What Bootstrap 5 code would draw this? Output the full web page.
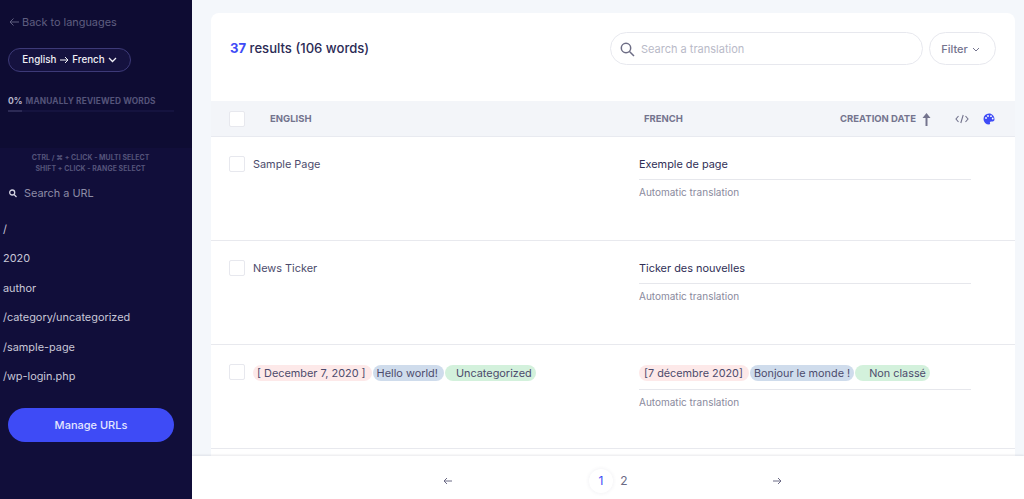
<!DOCTYPE html>
<html lang="en">
<head>
<meta charset="utf-8">
<title>Translations</title>
<link rel="stylesheet" href="https://cdn.jsdelivr.net/npm/bootstrap@5.3.0/dist/css/bootstrap.min.css">
<style>
html,body{height:499px;overflow:hidden}
body{font-family:Inter,"Liberation Sans",sans-serif;background:#f4f7fb;color:#2b2a55;font-size:12px}
.shell{height:499px}
.side{width:192px;flex:none;background:#110e3a;color:#c9c8d8;height:499px}
.side-top{height:148px;background:#0e0c33;padding:14px 8px 0}
.back{color:#5f5e80;font-size:10.9px;line-height:16px;display:flex;align-items:center;gap:2px}
.lang{margin-top:18px;width:123px;height:24px;border:1px solid #3d3a78;border-radius:12px;background:#15123f;color:#f0f0f6;font-size:9.8px;font-weight:500;display:flex;align-items:center;justify-content:center;gap:3px;padding:0}
.review{margin-top:23px;font-size:8.6px;font-weight:700;line-height:12px;color:#b9b8cc;display:flex;gap:3px;align-items:center}
.review span{color:#55547a;font-size:8.3px;letter-spacing:.02em;font-weight:700}
.bar{margin-top:3px;height:2px;width:166px;background:#15133f}
.bar i{display:block;height:2px;width:14px;background:#2c2a55}
.hint{padding:4px 11px 0 0;text-align:center;font-size:6.9px;line-height:11px;font-weight:700;color:#55547a;letter-spacing:.01em}
.urlsearch{margin-top:11px;padding-left:9px;display:flex;align-items:center;gap:7px;color:#8d8ca6;font-size:10.9px;line-height:16px}
.urls{margin-top:14px}
.urls div{height:29.4px;padding-left:3px;font-size:10.9px;line-height:29.4px;color:#c9c8d8}
.manage{display:block;margin:17px 0 0 8px;width:166px;height:34px;border:0;border-radius:17px;background:#3e4bf6;color:#e4e6ff;font-size:11px;font-weight:500}
.mainpane{min-width:0;height:499px}
.panel{margin:13px 9px 0 19px;background:#fff;border-radius:8px 8px 0 0;flex:1;min-height:0;overflow:hidden}
.phead{height:88px;padding:18px 19px 0 19px;display:flex;align-items:flex-start;justify-content:space-between}
.count{font-size:13.1px;font-weight:500;line-height:34px;color:#2b2a55}
.count b{color:#3e4bf6;font-weight:700}
.tools{display:flex;gap:6px;margin-top:1px}
.find{width:313px;height:33px;border:1px solid #e7e8ee;border-radius:17px;display:flex;align-items:center;gap:6px;padding:1px 0 0 9px;color:#b9bac8;font-size:11px}
.filt{width:67px;height:33px;border:1px solid #e7e8ee;border-radius:17px;background:#fff;color:#74748e;font-size:11px;font-weight:500;display:flex;align-items:center;justify-content:center;gap:4px;padding:1px 4px 0 0}
.thd{height:36px;background:#f3f5f9;border-bottom:1px solid #e8eaf0;display:flex;align-items:center;color:#74748e;font-size:9.5px;font-weight:700;white-space:nowrap;padding-top:1px}
.cb{width:16px;height:16px;border:1px solid #e7e8ee;background:#fff;border-radius:2px;flex:none;display:block}
.thd .cb{margin:-1px 0 0 18px}
.col-en{margin-left:25px;width:374px}
.col-fr{width:196px}
.col-dt{display:flex;align-items:center;gap:6px;width:115px}
.col-ic{display:flex;align-items:center;gap:14px}
.trow{height:104px;border-bottom:1px solid #e8e9ee;display:flex;align-items:flex-start;padding-top:19px;font-size:10.9px;color:#4c4b6c}
.trow .cb{margin-left:18px}
.src{margin-left:8px;width:386px;line-height:16px;display:flex;align-items:center}
.dst{width:332px;color:#2f2e56}
.dst-t{line-height:16px;padding-bottom:7px;border-bottom:1px solid #e6e7ec;display:flex;align-items:center}
.auto{margin-top:5px;line-height:14px;font-size:10px;color:#8a8a9d}
.tagged .src,.tagged .dst-t{margin-top:1px}
.tagged .dst-t{padding-bottom:8px}
.tagged .auto{margin-top:5px}
.tg{display:inline-block;border-radius:8px;line-height:16px;height:16px;white-space:nowrap;color:#4c4b6c}
.tg+.tg{margin-left:1px}
.tr{background:#fde9e9;padding:0 6px 0 4px}
.tb{background:#cfdcec;padding:0 6px 0 4px}
.tn{background:#d3f1dc;padding:0 4px 0 11px}
.dst .tg{font-size:10.85px}
.dst .tr{padding:0 6px 0 5px}
.dst .tb{padding:0 4px}
.dst .tn{padding:0 4px 0 14px}
.pager{height:43px;background:#fff;box-shadow:0 -1px 2px rgba(30,30,60,.1);display:flex;align-items:center;font-size:12px;color:#6b6a85;flex:none;padding:7px 0 0 251px}
.cur{width:24px;height:24px;border-radius:50%;background:#fff;box-shadow:0 0 4px rgba(40,40,90,.08);color:#3e4bf6;text-align:center;line-height:24px;margin-left:136px}
.two{margin-left:3px;width:16px;text-align:center}
.nxt{margin-left:140px}
</style>
</head>
<body>
<div class="shell d-flex">
  <aside class="side">
    <div class="side-top">
      <div class="back"><svg width="12" height="10" viewBox="0 0 12 10" fill="none" stroke="#5f5e80" stroke-width="1"><path d="M11 5H2M5.500 1.500 2 5l3.500 3.500"/></svg>Back to languages</div>
      <button class="lang" type="button">English <svg width="10" height="8" viewBox="0 0 10 8" fill="none" stroke="#f0f0f6" stroke-width="1"><path d="M1 4h8M6 1l3 3-3 3"/></svg> French <svg width="9" height="6" viewBox="0 0 9 6" fill="none" stroke="#f0f0f6" stroke-width="1.300"><path d="M1 1l3.500 3.500L8 1"/></svg></button>
      <div class="review">0% <span>MANUALLY REVIEWED WORDS</span></div>
      <div class="bar"><i></i></div>
    </div>
    <div class="hint">CTRL / ⌘ + CLICK - MULTI SELECT<br>SHIFT + CLICK - RANGE SELECT</div>
    <div class="urlsearch"><svg width="8" height="9" viewBox="0 0 8 9" fill="none" stroke="#d5d4e2" stroke-width="1.300"><circle cx="3.200" cy="3.500" r="2.500"/><path d="M5 5.500 7.500 8"/></svg>Search a URL</div>
    <div class="urls"><div>/</div><div>2020</div><div>author</div><div>/category/uncategorized</div><div>/sample-page</div><div>/wp-login.php</div></div>
    <button class="manage" type="button">Manage URLs</button>
  </aside>
  <main class="mainpane flex-grow-1 d-flex flex-column">
    <section class="panel">
      <div class="phead">
        <div class="count"><b>37</b> results (106 words)</div>
        <div class="tools">
          <div class="find"><svg width="15" height="15" viewBox="0 0 15 15" fill="none" stroke="#6d6d85" stroke-width="1.500"><circle cx="6" cy="6" r="4.700"/><path d="M9.500 9.500 14 14"/></svg>Search a translation</div>
          <button class="filt" type="button">Filter <svg width="8" height="5" viewBox="0 0 8 5" fill="none" stroke="#74748e" stroke-width="1"><path d="M1 1l3 3 3-3"/></svg></button>
        </div>
      </div>
      <div class="thd">
        <span class="cb"></span><span class="col-en">ENGLISH</span><span class="col-fr">FRENCH</span>
        <span class="col-dt">CREATION DATE <svg width="9" height="13" viewBox="0 0 9 13" fill="#74748e"><path d="M4.500 0 8.500 5H5.500V13H3.500V5H.5z"/></svg></span>
        <span class="col-ic"><svg width="14" height="10" viewBox="0 0 14 10" fill="none" stroke="#74748e" stroke-width="1.100"><path d="M3.500 2 1 5l2.500 3M10.500 2 13 5l-2.500 3M8.200 1 5.800 9"/></svg><svg width="12" height="12" viewBox="0 0 12 12"><path fill="#3e4bf6" d="M6 .5A5.500 5.500 0 0 0 6 11.500c1 0 1.300-.7 1-1.400-.4-.9.100-1.700 1-1.700h1.600c1.200 0 1.900-.9 1.900-2.200C11.500 3 9 .5 6 .5z"/><circle cx="3" cy="5" r=".9" fill="#fff"/><circle cx="5" cy="3" r=".9" fill="#fff"/><circle cx="8" cy="3.200" r=".9" fill="#fff"/><circle cx="9.700" cy="5.500" r=".9" fill="#fff"/></svg></span>
      </div>
      <div class="trow"><span class="cb"></span><div class="src">Sample Page</div><div class="dst"><div class="dst-t">Exemple de page</div><div class="auto">Automatic translation</div></div></div>
      <div class="trow"><span class="cb"></span><div class="src">News Ticker</div><div class="dst"><div class="dst-t">Ticker des nouvelles</div><div class="auto">Automatic translation</div></div></div>
      <div class="trow tagged"><span class="cb"></span><div class="src"><span class="tg tr">[ December 7, 2020 ]</span><span class="tg tb">Hello world!</span><span class="tg tn">Uncategorized</span></div><div class="dst"><div class="dst-t"><span class="tg tr">[7 décembre 2020]</span><span class="tg tb">Bonjour le monde !</span><span class="tg tn">Non classé</span></div><div class="auto">Automatic translation</div></div></div>
    </section>
    <nav class="pager">
      <svg width="10" height="8" viewBox="0 0 10 8" fill="none" stroke="#6b6a85" stroke-width="1"><path d="M9 4H1M4 1 1 4l3 3"/></svg>
      <span class="cur">1</span><span class="two">2</span>
      <svg class="nxt" width="10" height="8" viewBox="0 0 10 8" fill="none" stroke="#6b6a85" stroke-width="1"><path d="M1 4h8M6 1l3 3-3 3"/></svg>
    </nav>
  </main>
</div>
<script src="https://cdn.jsdelivr.net/npm/bootstrap@5.3.0/dist/js/bootstrap.bundle.min.js"></script>
</body>
</html>
